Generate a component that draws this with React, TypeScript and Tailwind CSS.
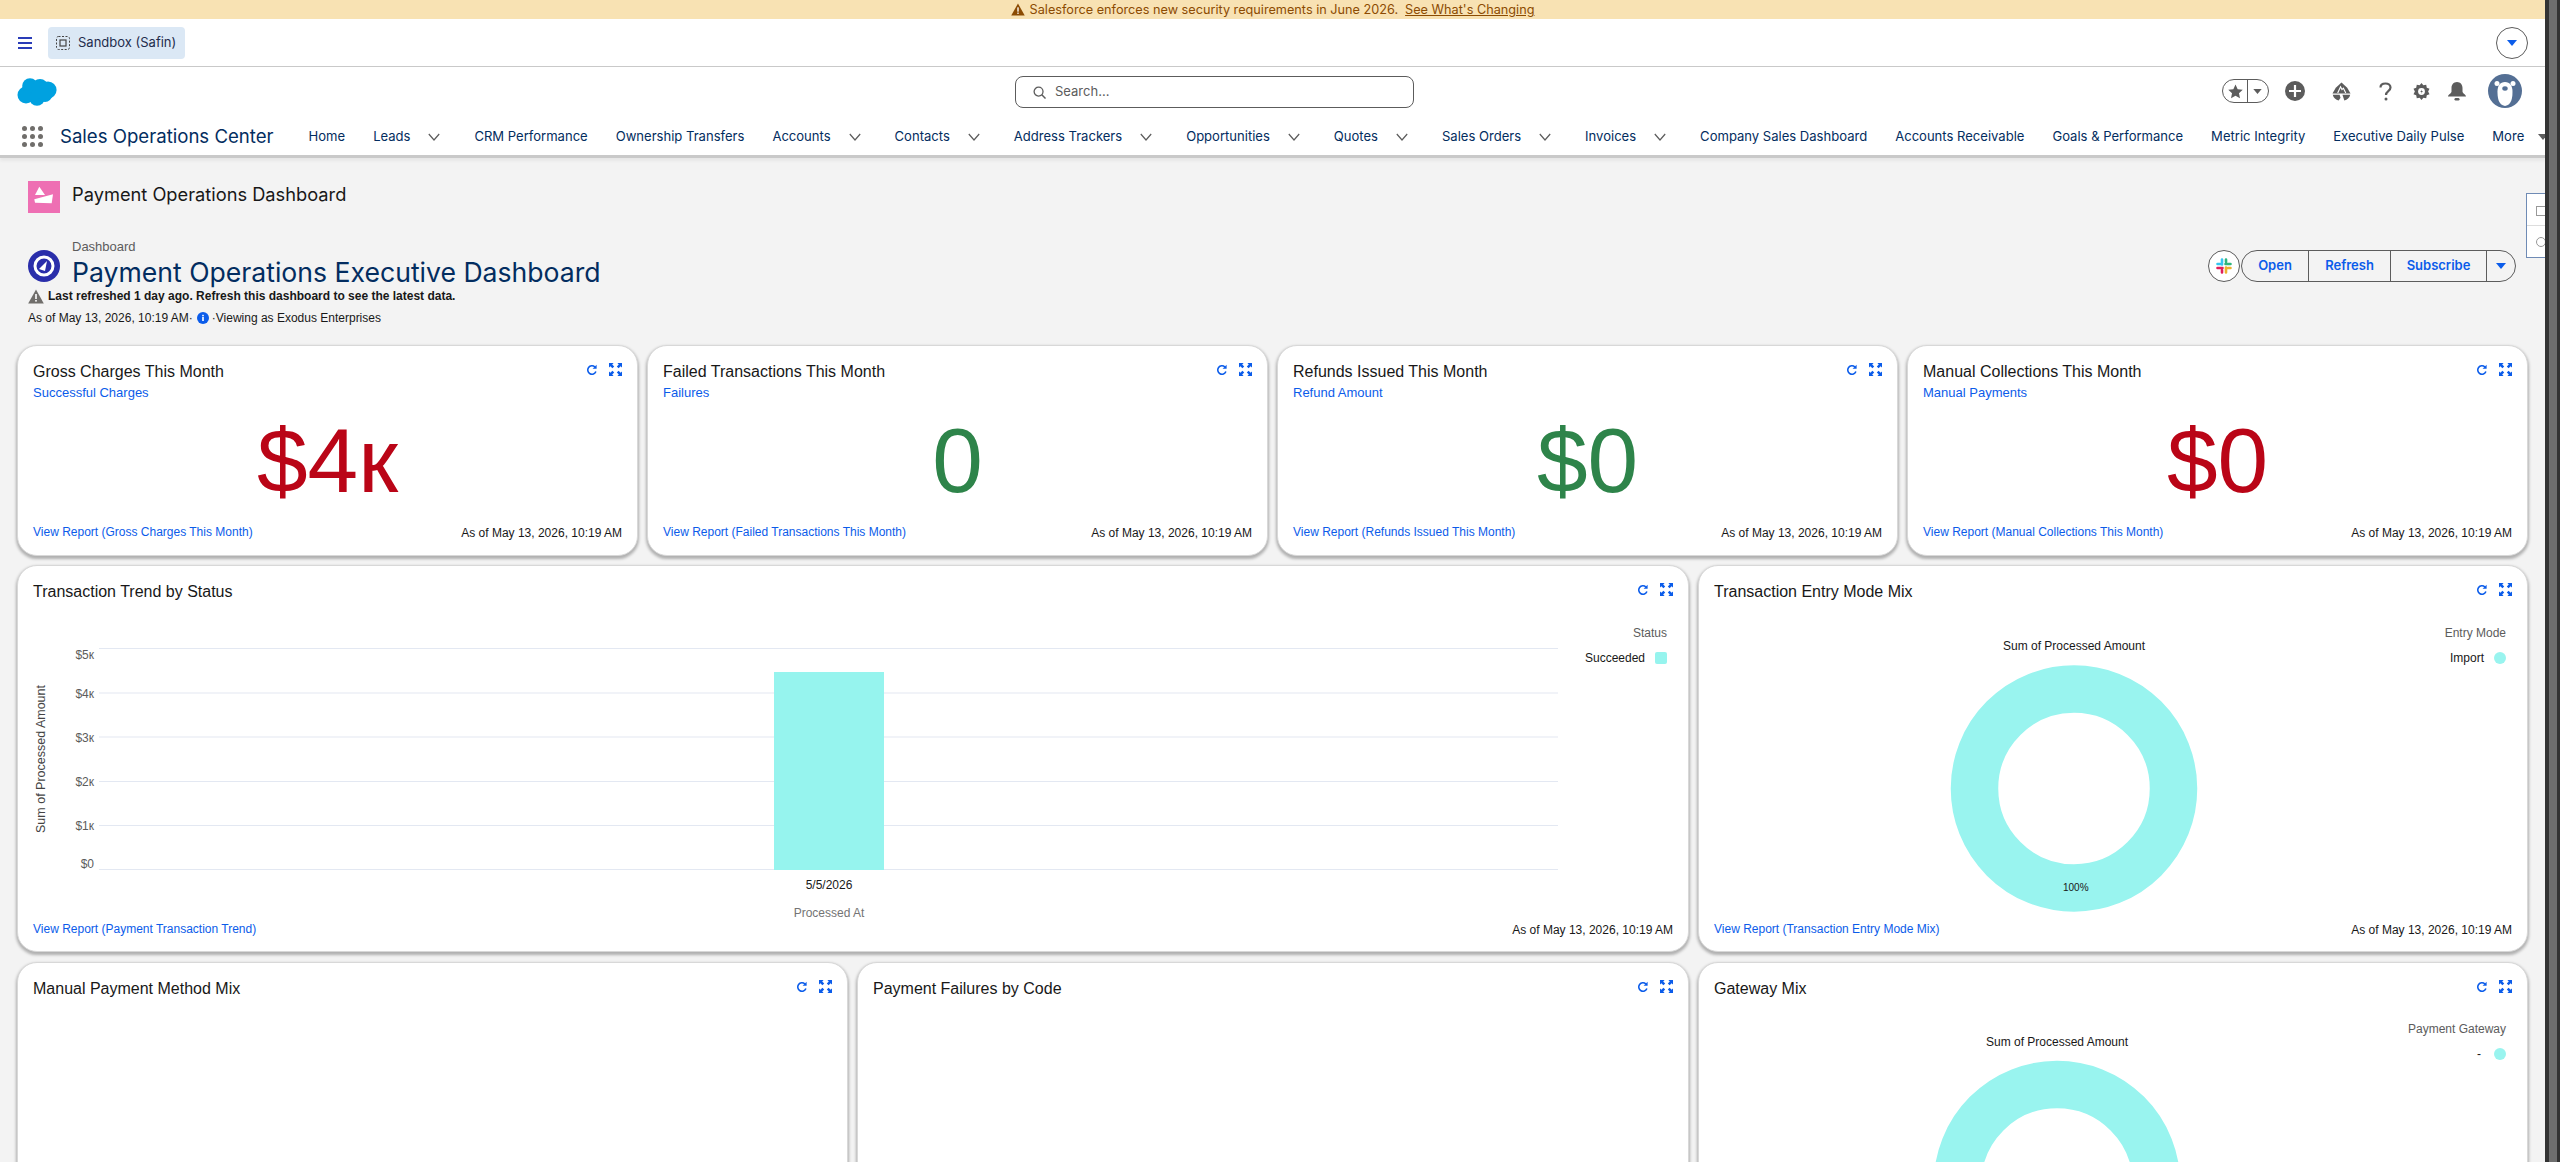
import React from "react";

const nav: [string, boolean][] = [
  ["Home", false],
  ["Leads", true],
  ["CRM Performance", false],
  ["Ownership Transfers", false],
  ["Accounts", true],
  ["Contacts", true],
  ["Address Trackers", true],
  ["Opportunities", true],
  ["Quotes", true],
  ["Sales Orders", true],
  ["Invoices", true],
  ["Company Sales Dashboard", false],
  ["Accounts Receivable", false],
  ["Goals & Performance", false],
  ["Metric Integrity", false],
  ["Executive Daily Pulse", false],
];

const cardCls =
  "relative rounded-[20px] bg-white px-[15px] pt-[16px] border border-[#d8d8d8] shadow-[0_2px_3px_1px_rgba(0,0,0,0.28)]";

function Caret({ cls, color = "#0b5cea" }: { cls?: string; color?: string }) {
  return (
    <svg viewBox="0 0 10 6" className={cls}>
      <path d="M0 0h10L5 6z" fill={color} />
    </svg>
  );
}

function Triangle({ cls, color }: { cls?: string; color: string }) {
  return (
    <svg viewBox="0 0 16 15" className={cls}>
      <path d="M8 0.5 L15.8 14.5 H0.2Z" fill={color} />
      <rect x="7.2" y="5" width="1.6" height="5" fill="#fff" />
      <rect x="7.2" y="11" width="1.6" height="1.6" fill="#fff" />
    </svg>
  );
}

function CardIcons() {
  return (
    <div className="absolute top-[17px] right-[15px] flex items-center gap-[11px]">
      <svg viewBox="0 0 12 12" className="w-[12px] h-[12px]" fill="none">
        <path d="M9.9 7.4A4.2 4.2 0 1 1 8.9 3" stroke="#0b5cea" strokeWidth="1.6" />
        <path d="M10.6 0.8V4.8H6.6Z" fill="#0b5cea" />
      </svg>
      <svg viewBox="0 0 13 13" className="w-[13px] h-[13px]" fill="#0b5cea">
        <path d="M0 0h4.6L3.2 1.4 5.2 3.4 3.4 5.2 1.4 3.2 0 4.6Z" />
        <path d="M13 0v4.6L11.6 3.2 9.6 5.2 7.8 3.4 9.8 1.4 8.4 0Z" />
        <path d="M0 13V8.4L1.4 9.8 3.4 7.8 5.2 9.6 3.2 11.6 4.6 13Z" />
        <path d="M13 13H8.4L9.8 11.6 7.8 9.6 9.6 7.8 11.6 9.8 13 8.4Z" />
      </svg>
    </div>
  );
}

function Footer({ link }: { link: string }) {
  return (
    <div className="h-[28px] flex items-center justify-between">
      <span className="text-[12px] text-[#0b5cea]">{link}</span>
      <span className="text-[12px] text-[#181818] pt-[2px]">As of May 13, 2026, 10:19 AM</span>
    </div>
  );
}

function Metric({ title, sub, link, value, color }: { title: string; sub: string; link: string; value: string; color: string }) {
  return (
    <div className={`${cardCls} h-[211px]`}>
      <CardIcons />
      <div className="text-[16px] leading-[20px] text-[#181818]">{title}</div>
      <div className="mt-[2px] text-[13px] leading-[18px] text-[#0b5cea]">{sub}</div>
      <div className="h-[116px] flex items-center justify-center leading-none" style={{ color }}>
        <span className="text-[91px] leading-none">{value}</span>
      </div>
      <Footer link={link} />
    </div>
  );
}

function Donut({ cx, cy, titleY }: { cx: number; cy: number; titleY: number }) {
  return (
    <>
      <text x={cx} y={titleY} textAnchor="middle" fontSize="12" fill="#181818">Sum of Processed Amount</text>
      <circle cx={cx} cy={cy} r="99.5" fill="none" stroke="#99f4ef" strokeWidth="47.5" />
    </>
  );
}

function TrendChart() {
  const ticks: [string, number][] = [["$5к", 648.5], ["$4к", 693], ["$3к", 737], ["$2к", 781.5], ["$1к", 825.5], ["$0", 869.5]];
  const labelY = [659, 698, 742, 786, 830, 868];
  const sx = (x: number) => x - 33;
  const sy = (y: number) => y - 620;
  return (
    <svg width="1640" height="300" className="block">
      {ticks.map(([t, y], i) => (
        <g key={t}>
          <line x1={sx(99)} x2={sx(1558)} y1={sy(y)} y2={sy(y)} stroke="#e3e8f2" strokeWidth="1.2" />
          <text x={sx(94)} y={sy(labelY[i])} textAnchor="end" fontSize="12" fill="#5c5c5c">{t}</text>
        </g>
      ))}
      <rect x={sx(774)} y={sy(672)} width="110" height="198" fill="#96f4ee" />
      <text x={sx(829)} y={sy(889)} textAnchor="middle" fontSize="12" fill="#181818">5/5/2026</text>
      <text x={sx(829)} y={sy(917)} textAnchor="middle" fontSize="12" fill="#747474">Processed At</text>
      <text transform={`translate(${sx(45)} ${sy(759)}) rotate(-90)`} textAnchor="middle" fontSize="12.5" fill="#444">Sum of Processed Amount</text>
      <text x={sx(1667)} y={sy(637)} textAnchor="end" fontSize="12" fill="#5c5c5c">Status</text>
      <text x={sx(1645)} y={sy(662)} textAnchor="end" fontSize="12" fill="#181818">Succeeded</text>
      <rect x={sx(1655)} y={sy(652)} width="12" height="12" rx="2" fill="#96f4ee" />
    </svg>
  );
}

function MixChart({ cx, cy, legend, item, itemRight, h, titleY, legY }: { cx: number; cy: number; legend: string; item: string; itemRight: number; h: number; titleY: number; legY: number }) {
  return (
    <svg width="798" height={h} className="block">
      <Donut cx={cx} cy={cy} titleY={titleY} />
      <text x="792" y={legY} textAnchor="end" fontSize="12" fill="#5c5c5c">{legend}</text>
      <text x={itemRight} y={legY + 25} textAnchor="end" fontSize="12" fill="#181818">{item}</text>
      <circle cx="786" cy={legY + 21} r="6" fill="#99f4ef" />
    </svg>
  );
}

function Cloud({ cls }: { cls?: string }) {
  return (
    <svg viewBox="0 0 40 28" className={cls}>
      <g fill="#00a1e0">
        <circle cx="9" cy="17" r="8.5" />
        <circle cx="13" cy="8" r="7.8" />
        <circle cx="23" cy="9" r="8" />
        <circle cx="31" cy="12" r="8.6" />
        <circle cx="20" cy="20" r="7.8" />
        <circle cx="28" cy="17" r="7" />
      </g>
    </svg>
  );
}

function Launcher() {
  return (
    <div className="grid grid-cols-[5px_5px_5px] gap-[3px] w-[21px] shrink-0">
      {Array.from({ length: 9 }).map((_, i) => (
        <span key={i} className="w-[5px] h-[5px] rounded-full bg-[#706e6b]" />
      ))}
    </div>
  );
}

function HeaderIcons() {
  return (
    <div className="ml-[808px] flex items-center">
      <div className="w-[47px] h-[24px] border border-[#5c5c5c] rounded-full flex items-center">
        <div className="w-[25px] h-full flex items-center justify-center border-r border-[#5c5c5c]">
          <svg viewBox="0 0 16 16" className="w-[15px] h-[15px]"><path d="M8 .5l2.3 5 5.4.6-4 3.7 1.1 5.4L8 12.5l-4.8 2.7 1.1-5.4-4-3.7 5.4-.6z" fill="#5c5c5c" /></svg>
        </div>
        <Caret cls="w-[9px] h-[5px] ml-[5px]" color="#5c5c5c" />
      </div>
      <svg viewBox="0 0 20 20" className="ml-[16px] w-[20px] h-[20px]">
        <circle cx="10" cy="10" r="10" fill="#5c5c5c" />
        <path d="M10 4v12M4 10h12" stroke="#fff" strokeWidth="2.2" />
      </svg>
      <svg viewBox="0 0 20 20" className="ml-[27px] w-[19px] h-[19px]">
        <path d="M10 0.5 16 6 19.5 12H.5L4 6z" fill="#5c5c5c" />
        <path d="M6 11.5 9 5l1.5 3L12 6.5l2.5 5" fill="none" stroke="#fff" strokeWidth="1.2" />
        <path d="M.8 13.5H8l1 3-2 3C4 19 1.6 16.8.8 13.5zM19.2 13.5H11l.5 1.5 1.5 4.5C16 19 18.4 16.8 19.2 13.5z" fill="#5c5c5c" />
      </svg>
      <svg viewBox="0 0 13 19" className="ml-[28px] w-[13px] h-[19px]">
        <path d="M1.5 5.5C1.5 3 3.5 1.5 6.5 1.5s5 1.7 5 4c0 3.8-4.5 3.5-4.5 7.5" fill="none" stroke="#5c5c5c" strokeWidth="2.2" />
        <circle cx="7" cy="17" r="1.5" fill="#5c5c5c" />
      </svg>
      <svg viewBox="0 0 18 18" className="ml-[21px] w-[17px] h-[17px]">
        <path d="M9 0l2 2.5 3-.6.6 3 2.9 1.1L16 9l1.5 3-2.9 1.1-.6 3-3-.6L9 18l-2-2.5-3 .6-.6-3L.5 12 2 9 .5 6l2.9-1.1.6-3 3 .6z" fill="#5c5c5c" />
        <circle cx="9" cy="9" r="3.6" fill="#fff" />
        <path d="M9.5 6.5 7.8 9.4H9.2L8.6 11.6 10.4 8.6H9z" fill="#5c5c5c" />
      </svg>
      <svg viewBox="0 0 18 19" className="ml-[18px] w-[18px] h-[19px]">
        <path d="M9 0c3.5 0 5.5 2.8 5.5 6v3.5c0 2 3.5 3 3.5 5H0c0-2 3.5-3 3.5-5V6C3.5 2.8 5.5 0 9 0z" fill="#5c5c5c" />
        <rect x="6.5" y="16" width="5" height="2.5" rx="1.2" fill="#5c5c5c" />
      </svg>
      <svg viewBox="0 0 34 34" className="ml-[22px] w-[34px] h-[34px]">
        <circle cx="17" cy="17" r="17" fill="#546f94" />
        <circle cx="9" cy="9.5" r="2.5" fill="#fff" />
        <circle cx="25" cy="9.5" r="2.5" fill="#fff" />
        <path d="M17 8c5 0 7.5 4 7.5 9.5 0 6-.8 13.5-7.5 14.5C10.3 31 9.5 23.5 9.5 17.5 9.5 12 12 8 17 8z" fill="#fff" />
        <ellipse cx="17" cy="14.5" rx="2.7" ry="2.2" fill="#546f94" />
      </svg>
    </div>
  );
}

export default function App() {
  return (
    <div className="w-[2560px] h-[1162px] overflow-hidden flex font-['Liberation_Sans',sans-serif]">
      <div className="w-[2545px] h-[1162px] overflow-hidden flex flex-col relative bg-[#f3f3f3]">
        <div className="h-[19px] shrink-0 bg-[#f8e2b3] flex items-center justify-center text-[12.7px] text-[#8c4b02] font-['Inter',sans-serif]">
          <Triangle cls="w-[14px] h-[13px] mr-[5px]" color="#8c4b02" />
          <span>Salesforce enforces new security requirements in June 2026.</span>
          <span className="underline ml-[7px]">See What's Changing</span>
        </div>
        <div className="h-[48px] shrink-0 bg-white border-b border-[#c9c9c9] flex items-center pl-[18px] pr-[17px]">
          <svg viewBox="0 0 14 12" className="w-[14px] h-[12px]">
            <path d="M0 1h14M0 6h14M0 11h14" stroke="#2a3cb8" strokeWidth="2" />
          </svg>
          <div className="ml-[16px] w-[137px] h-[32px] rounded-[4px] bg-[#dbe8f5] flex items-center pl-[8px] text-[13px] text-[#1f2d4d] font-['Inter',sans-serif]">
            <svg viewBox="0 0 14 14" className="w-[14px] h-[14px] mr-[8px]">
              <rect x="0.5" y="0.5" width="13" height="13" rx="2" fill="none" stroke="#444" strokeDasharray="2 1.5" />
              <rect x="4" y="4" width="6" height="6" fill="none" stroke="#444" strokeWidth="1.2" />
            </svg>
            Sandbox (Safin)
          </div>
          <div className="ml-auto w-[32px] h-[32px] rounded-full border border-[#5c5c5c] flex items-center justify-center">
            <Caret cls="w-[10px] h-[6px]" />
          </div>
        </div>
        <div className="h-[88px] shrink-0 bg-white shadow-[0_3px_0_#c9c9c9,0_6px_3px_rgba(0,0,0,0.05)] z-10 font-['Inter',sans-serif]">
          <div className="h-[48px] flex items-center pl-[17px]">
            <Cloud cls="w-[40px] h-[28px] mt-[1px]" />
            <div className="ml-[958px] mt-[2px] w-[399px] h-[32px] rounded-[8px] border border-[#5c5c5c] flex items-center pl-[17px] text-[13px] text-[#5c5c5c]">
              <svg viewBox="0 0 14 14" className="w-[13px] h-[13px] mr-[9px]" fill="none">
                <circle cx="6" cy="6" r="4.8" stroke="#5c5c5c" strokeWidth="1.4" />
                <path d="M9.5 9.5l4 4" stroke="#5c5c5c" strokeWidth="1.6" />
              </svg>
              Search...
            </div>
            <HeaderIcons />
          </div>
          <div className="h-[40px] flex items-center pl-[22px] pt-[2px] text-[#032d60] whitespace-nowrap">
            <Launcher />
            <span className="ml-[17px] text-[18.6px] leading-none">Sales Operations Center</span>
            <div className="ml-[35px] mt-[2px] flex items-center gap-[28px] text-[13.05px]">
              {nav.map(([n, c]) => (
                <div key={n} className="flex items-center">
                  <span>{n}</span>
                  {c && (
                    <svg viewBox="0 0 12 8" className="w-[12px] h-[8px] ml-[18px] mr-[6px]" fill="none">
                      <path d="M.8 1 6 7l5.2-6" stroke="#5c5c5c" strokeWidth="1.2" />
                    </svg>
                  )}
                </div>
              ))}
              <div className="flex items-center">
                <span>More</span>
                <Caret cls="w-[10px] h-[6px] ml-[14px] shrink-0" color="#5c5c5c" />
              </div>
            </div>
          </div>
        </div>

        <div className="absolute top-[193px] right-0 w-[19px] h-[65px] bg-white border border-r-0 border-[#6f8bb5] flex flex-col">
          <div className="h-[32px] border-b border-[#dddddd] pl-[9px] pt-[12px]">
            <div className="w-[10px] h-[10px] border border-[#999]" />
          </div>
          <div className="pl-[9px] pt-[11px]">
            <div className="w-[10px] h-[10px] rounded-full border border-[#999]" />
          </div>
        </div>

        <div className="shrink-0 pt-[26px] px-[28px]">
          <div className="flex items-center h-[32px] font-['Inter',sans-serif]">
            <svg viewBox="0 0 32 32" className="w-[32px] h-[32px]">
              <rect width="32" height="32" fill="#ee6fb3" />
              <path d="M11.3 5.7 17 14H7z" fill="#fff" />
              <path d="M6.3 18.3 25 13.3l-1.3 9L7 21.7z" fill="#fff" />
            </svg>
            <span className="ml-[12px] pb-[4px] text-[18.25px] text-[#181818]">Payment Operations Dashboard</span>
          </div>
          <div className="mt-[25px] flex">
            <svg viewBox="0 0 32 32" className="w-[32px] h-[32px] mt-[12px]">
              <circle cx="16" cy="16" r="16" fill="#2a2eaa" />
              <circle cx="16" cy="16" r="9" fill="none" stroke="#fff" strokeWidth="3" />
              <path d="M11 19l8-8-2 10z" fill="#fff" />
            </svg>
            <div className="ml-[12px]">
              <div className="text-[13px] leading-[18px] text-[#5c5c5c]">Dashboard</div>
              <div className="text-[26.6px] leading-[32px] text-[#032d60] font-['Inter',sans-serif]">Payment Operations Executive Dashboard</div>
            </div>
            <div className="ml-auto mr-[1px] mt-[12px] flex items-center h-[32px] font-semibold text-[13px] text-[#0b5cea] font-['Inter',sans-serif]">
              <div className="w-[32px] h-[32px] mr-[1px] rounded-full border border-[#5c5c5c] bg-white flex items-center justify-center">
                <svg viewBox="0 0 16 16" className="w-[16px] h-[16px]" fill="none" strokeLinecap="round" strokeWidth="2.6">
                  <path d="M6 1.5v5M1.5 6H4" stroke="#36c5f0" />
                  <path d="M14.5 6h-5M10 1.5V4" stroke="#2eb67d" />
                  <path d="M10 14.5v-5M14.5 10H12" stroke="#ecb22e" />
                  <path d="M1.5 10h5M6 14.5V12" stroke="#e01e5a" />
                </svg>
              </div>
              <div className="flex h-full border border-[#5c5c5c] rounded-full">
                <div className="w-[67px] flex items-center justify-center border-r border-[#5c5c5c]">Open</div>
                <div className="w-[82px] flex items-center justify-center border-r border-[#5c5c5c]">Refresh</div>
                <div className="w-[96px] flex items-center justify-center border-r border-[#5c5c5c]">Subscribe</div>
                <div className="w-[28px] flex items-center justify-center">
                  <Caret cls="w-[10px] h-[6px]" />
                </div>
              </div>
            </div>
          </div>
          <div className="h-[16px] flex items-center font-bold text-[12px] text-[#181818]">
            <Triangle cls="w-[16px] h-[15px] mr-[4px]" color="#706e6b" />
            Last refreshed 1 day ago. Refresh this dashboard to see the latest data.
          </div>
          <div className="mt-[5px] h-[18px] flex items-center text-[12px] text-[#181818]">
            <span>As of May 13, 2026, 10:19 AM·</span>
            <svg viewBox="0 0 12 12" className="w-[12px] h-[12px] ml-[4px] mr-[3px]">
              <circle cx="6" cy="6" r="6" fill="#0b5cea" />
              <rect x="5.2" y="5" width="1.6" height="4" fill="#fff" />
              <rect x="5.2" y="2.8" width="1.6" height="1.5" fill="#fff" />
            </svg>
            <span>·Viewing as Exodus Enterprises</span>
          </div>
        </div>

        <div className="shrink-0 mt-[18px] px-[17px] flex flex-col">
          <div className="grid grid-cols-4 gap-[9px]">
            <Metric title="Gross Charges This Month" sub="Successful Charges" value="$4к" color="#ba0517" link="View Report (Gross Charges This Month)" />
            <Metric title="Failed Transactions This Month" sub="Failures" value="0" color="#2e844a" link="View Report (Failed Transactions This Month)" />
            <Metric title="Refunds Issued This Month" sub="Refund Amount" value="$0" color="#2e844a" link="View Report (Refunds Issued This Month)" />
            <Metric title="Manual Collections This Month" sub="Manual Payments" value="$0" color="#ba0517" link="View Report (Manual Collections This Month)" />
          </div>
          <div className="mt-[9px] grid grid-cols-[1672px_830px] gap-[9px]">
            <div className={`${cardCls} h-[387px]`}>
              <CardIcons />
              <div className="text-[16px] leading-[20px] text-[#181818]">Transaction Trend by Status</div>
              <div className="mt-[18px]"><TrendChart /></div>
              <div className="-mt-[5px]"><Footer link="View Report (Payment Transaction Trend)" /></div>
            </div>
            <div className={`${cardCls} h-[387px]`}>
              <CardIcons />
              <div className="text-[16px] leading-[20px] text-[#181818]">Transaction Entry Mode Mix</div>
              <div className="mt-[18px] relative">
                <MixChart cx={360} cy={168.5} legend="Entry Mode" item="Import" itemRight={770} h={295} titleY={30} legY={17} />
                <span className="absolute left-[349px] top-[261px] text-[10px] leading-[14px] text-[#181818]">100%</span>
              </div>
              <Footer link="View Report (Transaction Entry Mode Mix)" />
            </div>
          </div>
          <div className="mt-[10px] grid grid-cols-[831px_832px_830px] gap-[9px]">
            <div className={`${cardCls} h-[387px]`}>
              <CardIcons />
              <div className="text-[16px] leading-[20px] text-[#181818]">Manual Payment Method Mix</div>
            </div>
            <div className={`${cardCls} h-[387px]`}>
              <CardIcons />
              <div className="text-[16px] leading-[20px] text-[#181818]">Payment Failures by Code</div>
            </div>
            <div className={`${cardCls} h-[387px]`}>
              <CardIcons />
              <div className="text-[16px] leading-[20px] text-[#181818]">Gateway Mix</div>
              <div className="mt-[18px]">
                <MixChart cx={343} cy={167} legend="Payment Gateway" item="-" itemRight={767} h={300} titleY={29} legY={16} />
              </div>
            </div>
          </div>
        </div>
      </div>
      <div className="w-[15px] h-full bg-[#333333] flex justify-center pl-[1px]">
        <div className="w-[8px] h-full bg-[#6e6e6e]" />
      </div>
    </div>
  );
}
